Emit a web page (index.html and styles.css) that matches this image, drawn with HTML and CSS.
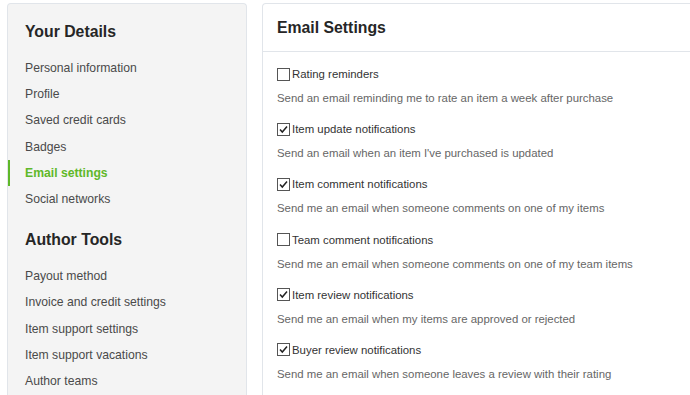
FILE: index.html
```html
<!DOCTYPE html>
<html lang="en">
<head>
  <meta charset="UTF-8" />
  <title>Email Settings</title>
  <link rel="stylesheet" href="styles.css">
</head>
<body>
  <div class="page">
    <aside class="sidebar">
      <h3>Your Details</h3>
      <ul class="nav">
        <li><a href="#">Personal information</a></li>
        <li><a href="#">Profile</a></li>
        <li><a href="#">Saved credit cards</a></li>
        <li><a href="#">Badges</a></li>
        <li><a href="#" class="active">Email settings</a></li>
        <li><a href="#">Social networks</a></li>
      </ul>

      <h3 class="second">Author Tools</h3>
      <ul class="nav">
        <li><a href="#">Payout method</a></li>
        <li><a href="#">Invoice and credit settings</a></li>
        <li><a href="#">Item support settings</a></li>
        <li><a href="#">Item support vacations</a></li>
        <li><a href="#">Author teams</a></li>
      </ul>
    </aside>

    <section class="card">
      <header class="card-head">Email Settings</header>

      <div class="card-body">
        <div class="option">
          <label><span class="box"></span>Rating reminders</label>
          <p>Send an email reminding me to rate an item a week after purchase</p>
        </div>
        <div class="option">
          <label><span class="box"><svg viewBox="0 0 11 11"><path d="M2 5.5 L4.3 8 L9 2.5" /></svg></span>Item update notifications</label>
          <p>Send an email when an item I've purchased is updated</p>
        </div>
        <div class="option">
          <label><span class="box"><svg viewBox="0 0 11 11"><path d="M2 5.5 L4.3 8 L9 2.5" /></svg></span>Item comment notifications</label>
          <p>Send me an email when someone comments on one of my items</p>
        </div>
        <div class="option">
          <label><span class="box"></span>Team comment notifications</label>
          <p>Send me an email when someone comments on one of my team items</p>
        </div>
        <div class="option">
          <label><span class="box"><svg viewBox="0 0 11 11"><path d="M2 5.5 L4.3 8 L9 2.5" /></svg></span>Item review notifications</label>
          <p>Send me an email when my items are approved or rejected</p>
        </div>
        <div class="option">
          <label><span class="box"><svg viewBox="0 0 11 11"><path d="M2 5.5 L4.3 8 L9 2.5" /></svg></span>Buyer review notifications</label>
          <p>Send me an email when someone leaves a review with their rating</p>
        </div>
      </div>
    </section>
  </div>
</body>
</html>
```

FILE: styles.css
```css
* {
  box-sizing: border-box;
}

html, body {
  margin: 0;
  padding: 0;
  background: #ffffff;
  font-family: 'Liberation Sans', Arial, sans-serif;
  overflow: hidden;
}

.page {
  display: flex;
  gap: 15px;
  height: 100vh;
  padding: 3px 0 0 7px;
  width: 720px;
}

.sidebar {
  width: 240px;
  flex-shrink: 0;
  background: #f4f4f4;
  border: 1px solid #e1e5ea;
  border-bottom: 0;
  border-radius: 4px 4px 0 0;
  padding: 18px 0 0;
  overflow: hidden;
}

.sidebar h3 {
  margin: 0;
  padding-left: 17px;
  font-size: 15.8px;
  line-height: 20px;
  font-weight: bold;
  color: #262626;
}

.sidebar h3.second {
  margin-top: 18px;
}

.nav {
  list-style: none;
  margin: 13px 0 0;
  padding: 0;
}

.nav a {
  display: block;
  padding-left: 17px;
  font-size: 12.2px;
  line-height: 26.2px;
  color: #4a4a4a;
  text-decoration: none;
}

.nav a.active {
  margin-left: -1px;
  padding-left: 15px;
  border-left: 3px solid #5fb829;
  color: #5fb829;
  font-weight: bold;
}

.card {
  width: 450px;
  flex-shrink: 0;
  background: #ffffff;
  border: 1px solid #e1e5ea;
  border-bottom: 0;
  border-radius: 4px 4px 0 0;
  overflow: hidden;
}

.card-head {
  padding: 14px 14px 13px;
  font-size: 15.8px;
  line-height: 20px;
  font-weight: bold;
  color: #262626;
  border-bottom: 1px solid #e1e5ea;
}

.card-body {
  padding: 12px 14px 0;
}

.option {
  margin-bottom: 11.2px;
}

.option label {
  display: flex;
  align-items: center;
  gap: 2px;
  font-size: 11.4px;
  line-height: 20px;
  color: #333333;
}

.box {
  display: inline-flex;
  width: 13px;
  height: 13px;
  border: 1px solid #555555;
  background: #ffffff;
}

.box svg {
  width: 11px;
  height: 11px;
  fill: none;
  stroke: #222222;
  stroke-width: 1.5;
}

.option p {
  margin: 4px 0 0;
  font-size: 11.4px;
  line-height: 20px;
  color: #666666;
}
```
